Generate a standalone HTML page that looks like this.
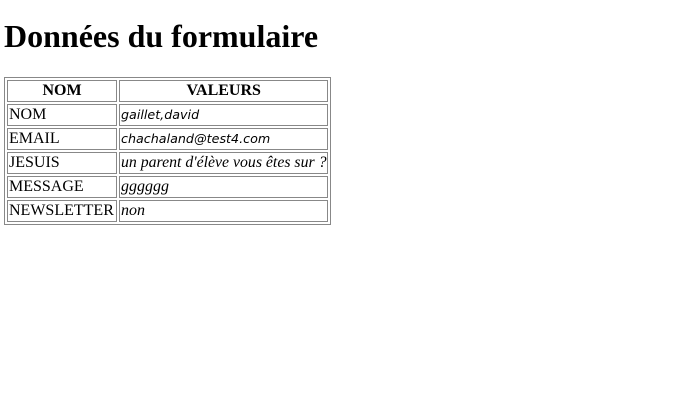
<!DOCTYPE html>
<html><head><meta charset="utf-8"><style>
body{margin:4px;font-family:"Liberation Serif",serif;font-size:16px;background:#fff;color:#000}
h1{font-size:32px;margin:18px 0 22px}
table{border:1px solid #888;border-spacing:2px;border-collapse:separate}
td,th{border:1px solid #888;padding:1px;height:18px;line-height:18px}
.s{font-family:"DejaVu Sans",sans-serif;font-style:italic;font-size:12.7px}
.i{font-style:italic}
.j{font-style:italic;font-size:15.8px}
</style></head><body>
<h1>Données du formulaire</h1>
<table>
<tr><th style="width:106px">NOM</th><th>VALEURS</th></tr>
<tr><td>NOM</td><td class="s">gaillet,david</td></tr>
<tr><td>EMAIL</td><td class="s">chachaland@test4.com</td></tr>
<tr><td>JESUIS</td><td class="j">un parent d'élève vous êtes sur ?</td></tr>
<tr><td>MESSAGE</td><td class="i">gggggg</td></tr>
<tr><td>NEWSLETTER</td><td class="i">non</td></tr>
</table>
</body></html>
